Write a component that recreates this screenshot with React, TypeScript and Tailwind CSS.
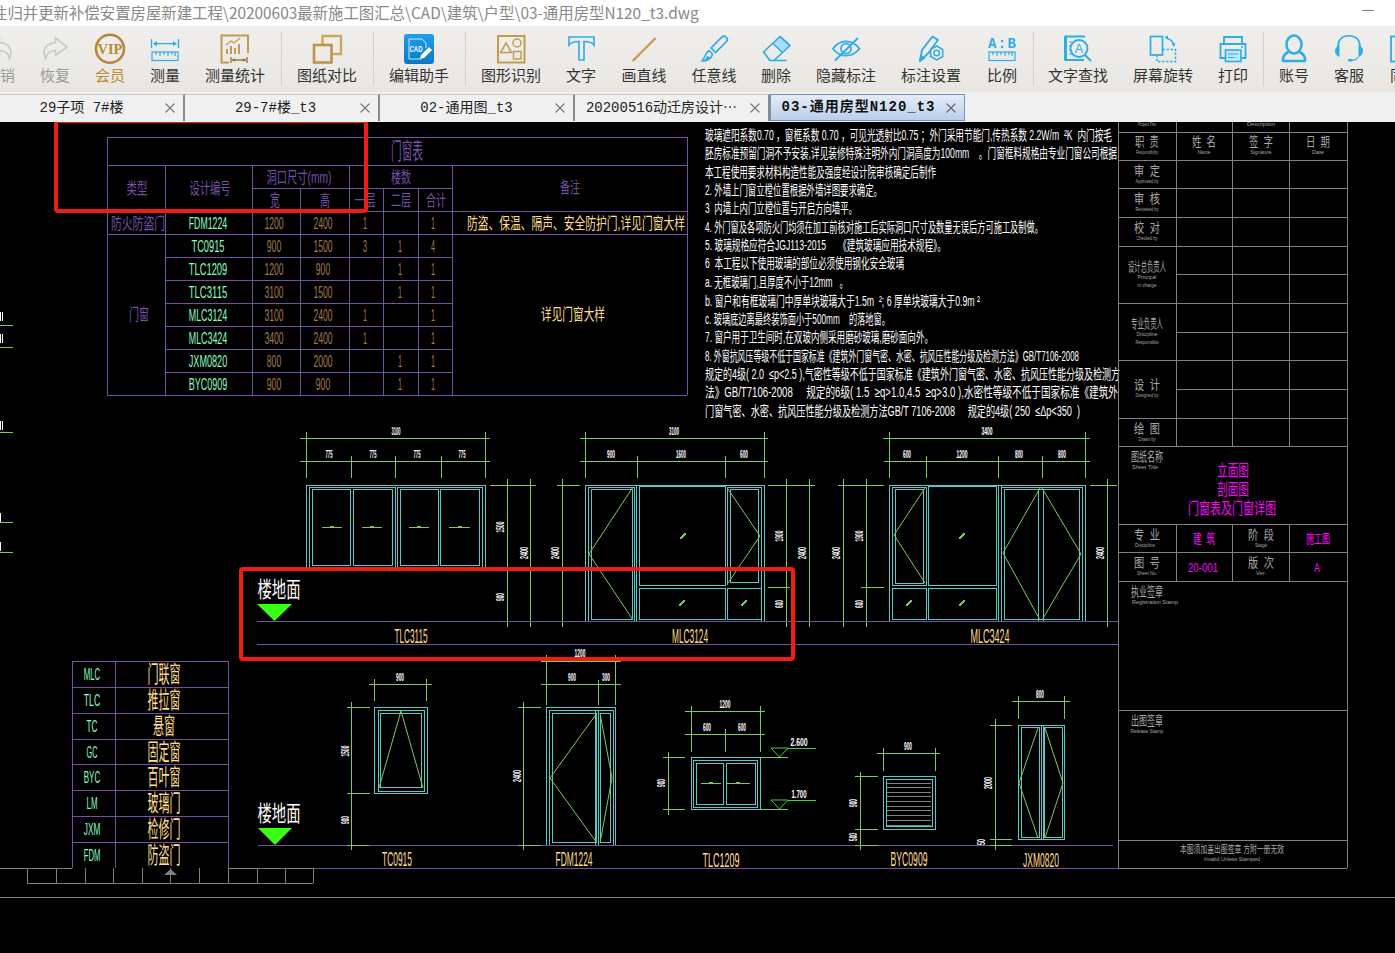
import { ReactNode } from "react";

const CJK = '"Liberation Sans","Noto Sans CJK SC",sans-serif';
const GOLD = "#c19c4e";
const BLUE = "#2cace9";
const PURPLE = "#7650a8";
const GREEN = "#7ccb55";
const CYAN = "#58c9c9";
const MINT = "#86ffc0";
const BROWN = "#a0794a";
const YELLOW = "#ffdf8a";
const GREY = "#808080";
const TXT = "#a8a8a8";
const PINK = "#ff00ff";

const Box = ({ children }: { children: ReactNode }) => (
    <svg width="32" height="32" viewBox="0 0 32 32" fill="none" className="block overflow-visible">
        {children}
    </svg>
);

const arrow = "M16.5 5 L28 14 L16.5 22.5 V17.5 C11 17.5 7.5 20 6.5 25.5 C3 18 6 10 16.5 9.5 Z";

const ruler = (y: number) => (
    <g stroke={BLUE} strokeWidth="1.2">
        <rect x="3" y={y} width="26" height="8.5" />
        <path d={`M7 ${y}v3M11 ${y}v4M15 ${y}v3M19 ${y}v4M23 ${y}v3M26 ${y}v4`} />
    </g>
);

const ICONS: Record<string, ReactNode> = {
    撤销: (
        <Box>
            <path d={arrow} stroke="#c8c8c8" strokeWidth="1.6" transform="matrix(-1 0 0 1 32 0)" />
        </Box>
    ),
    恢复: (
        <Box>
            <path d={arrow} stroke="#c8c8c8" strokeWidth="1.6" />
        </Box>
    ),
    会员: (
        <Box>
            <circle cx="16" cy="15.7" r="14" stroke="#b8863b" strokeWidth="2.6" />
            <text x="16" y="20.5" textAnchor="middle" fontFamily='"Liberation Serif",serif' fontWeight="700" fontSize="14" fill="#b98a2f" textLength="25" lengthAdjust="spacingAndGlyphs">
                VIP
            </text>
        </Box>
    ),
    测量: (
        <Box>
            <path d="M2.5 6v9M29.5 6v9M5 10.7h22" stroke={BLUE} strokeWidth="1.3" />
            <path d="M4 10.7l4-2.6v5.2zM28 10.7l-4-2.6v5.2z" fill={BLUE} />
            {ruler(19)}
        </Box>
    ),
    测量统计: (
        <Box>
            <path d="M10 29.5H2.5V2.5H29V20" stroke={GOLD} strokeWidth="2" />
            <path d="M8 21v-5M12 21v-8M16 21v-6M20 21v-10" stroke={GOLD} strokeWidth="2" />
            <path d="M7 12l5-4 3 2 6-5" stroke={GOLD} strokeWidth="1.3" />
            <path d="M12 24v6M28 24v6M13 27h14" stroke="#9b7b3a" strokeWidth="1.4" />
            <path d="M13 27l3-2v4zM27 27l-3-2v4z" fill="#9b7b3a" />
        </Box>
    ),
    图纸对比: (
        <Box>
            <path d="M11.5 11V3H30V21H21" stroke="#cda955" strokeWidth="2.4" />
            <rect x="3" y="12" width="17.5" height="17.5" stroke="#bc954a" strokeWidth="2.6" />
        </Box>
    ),
    编辑助手: (
        <Box>
            <defs>
                <linearGradient id="cad" x1="0" y1="0" x2="0" y2="1">
                    <stop offset="0" stopColor="#1f9eec" />
                    <stop offset="1" stopColor="#0a77c8" />
                </linearGradient>
            </defs>
            <rect x="1" y="1" width="30" height="30" rx="3" fill="url(#cad)" />
            <path d="M6 6h13l4 4v5M6 6v20h12" stroke="#cfeaff" strokeWidth="1" />
            <text x="13" y="19" textAnchor="middle" fontFamily='"Liberation Sans",sans-serif' fontWeight="700" fontSize="9" fill="#fff" textLength="13" lengthAdjust="spacingAndGlyphs">
                CAD
            </text>
            <path d="M17 26l1-4 8-8 3 3-8 8z" fill="#fff" />
        </Box>
    ),
    图形识别: (
        <Box>
            <rect x="3" y="3" width="26.5" height="26.5" stroke={GOLD} strokeWidth="2" />
            <path d="M11 10l5.5 9.5H5.5z" stroke={GOLD} strokeWidth="1.5" />
            <circle cx="22" cy="10" r="4" stroke={GOLD} strokeWidth="1.5" />
            <rect x="18.5" y="18.5" width="7.5" height="7.5" stroke={GOLD} strokeWidth="1.5" />
        </Box>
    ),
    文字: (
        <Box>
            <path d="M4 4H29V12C27 9 24 8.5 19 8.5V27H14V8.5C9 8.5 6 9 4 12Z" stroke={BLUE} strokeWidth="1.6" />
        </Box>
    ),
    画直线: (
        <Box>
            <path d="M5.3 27.3L27 5.7" stroke="#c2a25a" strokeWidth="2.4" strokeLinecap="round" />
        </Box>
    ),
    任意线: (
        <Box>
            <path d="M13 15L24 4a3.2 3.2 0 0 1 4.5 4.5L17.5 19.5Z" stroke={BLUE} strokeWidth="1.7" />
            <path d="M11 17.5L14.5 21C13.5 26 8 28.5 4 27.8C7 25 7 20 11 17.5Z" stroke={BLUE} strokeWidth="1.5" />
            <path d="M9 23c-1 2-2 3.5-4 4.5c3 0 6-1 8-3z" fill={BLUE} />
        </Box>
    ),
    删除: (
        <Box>
            <path d="M13 10.5L20 3.5L30 12.5L22.5 19.5Z" fill="#a9dff6" />
            <path d="M3.5 19L20 3.5L30 12.5L14 27.5H10Z" stroke={BLUE} strokeWidth="1.7" strokeLinejoin="round" />
            <path d="M13 10.5L22.5 19.5M14 27.5H26.5" stroke={BLUE} strokeWidth="1.5" />
        </Box>
    ),
    隐藏标注: (
        <Box>
            <path d="M3 15.7C10 6 22 6 29.5 15.7C22 25 10 25 3 15.7Z" stroke={BLUE} strokeWidth="1.8" />
            <circle cx="16" cy="15.7" r="5" stroke={BLUE} strokeWidth="1.8" />
            <path d="M5 27.5L28 5" stroke={BLUE} strokeWidth="1.8" />
        </Box>
    ),
    标注设置: (
        <Box>
            <path d="M5 28L7 17L17.5 3.5L23 7L13 20.5Z" stroke={BLUE} strokeWidth="1.9" strokeLinejoin="round" />
            <path d="M4 29L5.5 21.5L10.5 25.5Z" fill={BLUE} />
            <path d="M21.7 13l6 3.5v7l-6 3.5l-6-3.5v-7z" stroke={BLUE} strokeWidth="1.5" fill="#efedea" />
            <circle cx="21.7" cy="20" r="2.8" stroke={BLUE} strokeWidth="1.5" />
        </Box>
    ),
    比例: (
        <Box>
            <text x="16" y="14.5" textAnchor="middle" fontFamily='"Liberation Mono",monospace' fontWeight="700" fontSize="14" fill={BLUE} textLength="28" lengthAdjust="spacing">
                A:B
            </text>
            {ruler(19)}
        </Box>
    ),
    文字查找: (
        <Box>
            <path d="M23 3.5H3.5V27H22" stroke={BLUE} strokeWidth="1.8" />
            <path d="M3.5 3.5V27" stroke={BLUE} strokeWidth="3" />
            <path d="M7 9h3M7 13h3M7 17h3M7 21h3" stroke={BLUE} strokeWidth="1" />
            <circle cx="17" cy="15.5" r="8.5" stroke={BLUE} strokeWidth="1.8" fill="#efedea" />
            <path d="M23 22l6 6" stroke={BLUE} strokeWidth="2" />
            <text x="17" y="20" textAnchor="middle" fontFamily='"Liberation Sans",sans-serif' fontSize="12.5" fill={BLUE}>
                A
            </text>
        </Box>
    ),
    屏幕旋转: (
        <Box>
            <rect x="3.5" y="3.5" width="12" height="18.5" stroke={BLUE} strokeWidth="1.7" />
            <path d="M15.5 16.5H28.5V28.5H10V22" stroke={BLUE} strokeWidth="1.5" strokeDasharray="2.5 1.5" />
            <path d="M19 5c4 1 7 3 8 7" stroke={BLUE} strokeWidth="1.3" />
            <path d="M17.5 4l3.5-1.5v4zM27 14l-2.5-3.5h4z" fill={BLUE} />
        </Box>
    ),
    打印: (
        <Box>
            <path d="M7 11V4H25V11" stroke={BLUE} strokeWidth="1.8" />
            <path d="M8 25H3.5V11H28.5V25H24" stroke={BLUE} strokeWidth="1.8" />
            <rect x="8.5" y="17" width="15.5" height="11.5" fill="#bfe7fa" stroke={BLUE} strokeWidth="1.6" />
            <path d="M11 21h10M11 24.5h7" stroke={BLUE} strokeWidth="1.1" />
            <circle cx="25" cy="14" r="1" fill={BLUE} />
        </Box>
    ),
    账号: (
        <Box>
            <ellipse cx="16" cy="11.5" rx="7.5" ry="9" stroke={BLUE} strokeWidth="2.5" />
            <path d="M10.5 19C6 21 4.5 24 5 28H27C27.5 24 26 21 21.5 19" stroke={BLUE} strokeWidth="2.5" strokeLinejoin="round" />
        </Box>
    ),
    客服: (
        <Box>
            <path d="M5 17V14C5 6 10 2.7 16 2.7S27 6 27 14V17" stroke={BLUE} strokeWidth="1.6" />
            <path d="M6.5 12V24C3.5 23 2 20.5 2 18S3.5 13 6.5 12Z" fill={BLUE} />
            <path d="M25.5 12V24C28.5 23 30 20.5 30 18S28.5 13 25.5 12Z" fill={BLUE} />
            <path d="M25 24C24 26 22 27.3 19 27.3" stroke={BLUE} strokeWidth="1.2" />
            <rect x="15" y="26" width="4.5" height="2.5" rx="1" fill={BLUE} />
        </Box>
    ),
    同步: (
        <Box>
            <rect x="2" y="3.5" width="24" height="25" stroke={BLUE} strokeWidth="1.8" />
        </Box>
    ),
};

// label, width of the toolbar cell, and a marker for the group separators
const TOOLS: [string, number, string?][] = [
    ["撤销", 56, "#999"],
    ["恢复", 54, "#999"],
    ["会员", 56, "#b88a3a"],
    ["测量", 54],
    ["测量统计", 86],
    ["|", 6],
    ["图纸对比", 86],
    ["|", 6],
    ["编辑助手", 86],
    ["|", 6],
    ["图形识别", 86],
    ["文字", 54],
    ["画直线", 72],
    ["任意线", 68],
    ["删除", 56],
    ["隐藏标注", 84],
    ["标注设置", 86],
    ["比例", 56],
    ["|", 6],
    ["文字查找", 84],
    ["屏幕旋转", 86],
    ["打印", 54],
    ["|", 6],
    ["账号", 56],
    ["客服", 54],
    ["同步", 58],
];

const Toolbar = () => (
    <div className="h-[66px] shrink-0 overflow-hidden bg-gradient-to-b from-[#f0efed] to-[#e9e6e2]">
        <div className="ml-[-28px] flex h-full w-[1500px]">
            {TOOLS.map(([label, w, color], i) =>
                label === "|" ? (
                    <div key={i} className="flex w-[6px] shrink-0 justify-center py-[6px]">
                        <div className="w-px bg-[#d2d0cb]" />
                    </div>
                ) : (
                    <div key={i} className="flex shrink-0 flex-col items-center pt-[7px]" style={{ width: w }}>
                        {ICONS[label]}
                        <div className="whitespace-nowrap text-[15px] leading-[20px]" style={{ color: color || "#333" }}>
                            {label}
                        </div>
                    </div>
                )
            )}
        </div>
    </div>
);

const Close = ({ dark }: { dark?: boolean }) => (
    <svg width="10" height="10" viewBox="0 0 10 10" className="absolute right-[8px] top-[8px]">
        <path d="M0.5 0.5L9.5 9.5M9.5 0.5L0.5 9.5" stroke={dark ? "#666" : "#777"} strokeWidth="1.2" />
    </svg>
);

const TABS: [string, number][] = [
    ["29子项 7#楼", 185],
    ["29-7#楼_t3", 195],
    ["02-通用图_t3", 195],
    ["20200516动迁房设计⋯", 195],
];

const Tabs = () => (
    <div className="flex h-[30px] shrink-0 items-end bg-[#f0f0f0] pb-px font-['Liberation_Mono','Noto_Sans_CJK_SC',monospace] text-[14px] text-[#222]">
        {TABS.map(([t, w], i) => (
            <div
                key={t}
                className={`relative flex h-[27px] shrink-0 items-center justify-center border-r-2 border-t border-r-[#8a8a8a] border-t-[#c8c8c8] bg-[#f0f0f0] whitespace-nowrap ${
                    i === 1 ? "pr-[12px]" : "pr-[20px]"
                }`}
                style={{ width: w }}
            >
                {t}
                <Close />
            </div>
        ))}
        <div className="relative flex h-[27px] w-[195px] shrink-0 items-center justify-center border border-[#6f94c4] bg-gradient-to-b from-[#e6edf8] to-[#b9cfe9] pr-[18px] font-bold tracking-[1px] whitespace-nowrap text-[#111]">
            03-通用房型N120_t3
            <Close dark />
        </div>
    </div>
);

// tall, squeezed CAD lettering: x/y are the centre of the string, w its width on screen
const T = ({ x, y, w, s = 13, c = "#fff", t, r, start }: { x: number; y: number; w?: number; s?: number; c?: string; t: string; r?: boolean; start?: boolean }) => (
    <text
        x={x}
        y={y}
        fontSize={s}
        fill={c}
        fontWeight={s <= 11 && c === "#fff" ? 700 : 400}
        textAnchor={start ? "start" : "middle"}
        dominantBaseline="central"
        textLength={w}
        lengthAdjust="spacingAndGlyphs"
        transform={r ? `rotate(-90 ${x} ${y})` : undefined}
        xmlSpace="preserve"
    >
        {t}
    </text>
);

const Lines = ({ c, d, w = 1 }: { c: string; d: number[][]; w?: number }) => (
    <path d={d.map((a) => `M${a[0]} ${a[1]}L${a[2]} ${a[3]}`).join("")} stroke={c} strokeWidth={w} fill="none" shapeRendering="crispEdges" />
);

const Rects = ({ d }: { d: number[][] }) => (
    <path d={d.map((a) => `M${a[0]} ${a[1]}H${a[2]}V${a[3]}H${a[0]}Z`).join("")} stroke={CYAN} fill="none" shapeRendering="crispEdges" />
);

const Swing = ({ d }: { d: number[][] }) => <path d={d.map((p) => `M${p[0]} ${p[1]}L${p[2]} ${p[3]}L${p[4]} ${p[5]}`).join("")} stroke={GREEN} fill="none" />;

// dimension line with ticks: y, from, to, tick xs, top and bottom of the ticks
const HDim = ({ y, a, b, ticks, top, bot }: { y: number; a: number; b: number; ticks: number[]; top: number; bot: number }) => (
    <Lines c={GREEN} d={[[a, y, b, y], ...ticks.map((x) => [x, top, x, bot])]} />
);

const Glass = ({ x, y }: { x: number; y: number }) => <path d={`M${x - 3} ${y + 3}L${x + 3} ${y - 3}M${x - 2} ${y + 3}L${x + 3} ${y - 2}M${x - 3} ${y + 2}L${x + 2} ${y - 3}`} stroke={GREEN} fill="none" />;

const Handle = ({ a, b, y }: { a: number; b: number; y: number }) => (
    <g>
        <Lines c={GREEN} d={[[a, y, b, y]]} />
        <Lines c={GREEN} d={[[(a + b) / 2 - 2, y - 1, (a + b) / 2 + 2, y - 1]]} />
    </g>
);

const DoorTable = () => {
    const rows = [
        ["FDM1224", "1200", "2400", "1", "", "1"],
        ["TC0915", "900", "1500", "3", "1", "4"],
        ["TLC1209", "1200", "900", "", "1", "1"],
        ["TLC3115", "3100", "1500", "", "1", "1"],
        ["MLC3124", "3100", "2400", "1", "", "1"],
        ["MLC3424", "3400", "2400", "1", "", "1"],
        ["JXM0820", "800", "2000", "", "1", "1"],
        ["BYC0909", "900", "900", "", "1", "1"],
    ];
    const ys = [224, 247, 270, 293, 316, 339, 362, 385];
    return (
        <g>
            <Lines
                c={PURPLE}
                d={[
                    [107, 137, 687, 137],
                    [107, 165, 687, 165],
                    [252, 188, 452, 188],
                    [107, 211, 687, 211],
                    [107, 234, 687, 234],
                    [165, 257, 452, 257],
                    [165, 280, 452, 280],
                    [165, 303, 452, 303],
                    [165, 326, 452, 326],
                    [165, 349, 452, 349],
                    [165, 372, 452, 372],
                    [107, 395, 687, 395],
                    [107, 137, 107, 395],
                    [687, 137, 687, 395],
                    [165, 165, 165, 395],
                    [252, 165, 252, 395],
                    [300, 188, 300, 395],
                    [349, 165, 349, 395],
                    [383, 188, 383, 395],
                    [418, 188, 418, 395],
                    [452, 165, 452, 395],
                ]}
            />
            <T x={407} y={151} w={32} s={23} c={PURPLE} t="门窗表" />
            <T x={137} y={188} w={21} s={16} c={PURPLE} t="类型" />
            <T x={210} y={188} w={41} s={16} c={PURPLE} t="设计编号" />
            <T x={299} y={177} w={65} s={16} c={PURPLE} t="洞口尺寸(mm)" />
            <T x={401} y={177} w={20} s={16} c={PURPLE} t="楼数" />
            <T x={275} y={200} w={10} s={16} c={PURPLE} t="宽" />
            <T x={325} y={200} w={10} s={16} c={PURPLE} t="高" />
            <T x={365} y={200} w={21} s={16} c={PURPLE} t="一层" />
            <T x={401} y={200} w={20} s={16} c={PURPLE} t="二层" />
            <T x={436} y={200} w={20} s={16} c={PURPLE} t="合计" />
            <T x={570} y={187} w={20} s={16} c={PURPLE} t="备注" />
            <T x={138} y={223} w={54} s={16} c={PURPLE} t="防火防盗门" />
            <T x={139} y={314} w={20} s={16} c={PURPLE} t="门窗" />
            <T x={576} y={223} w={218} s={16} c={YELLOW} t="防盗、保温、隔声、安全防护门,详见门窗大样" />
            <T x={573} y={314} w={64} s={16} c={YELLOW} t="详见门窗大样" />
            {rows.map((r, i) => (
                <g key={r[0]}>
                    <T x={208} y={ys[i] - 0.5} w={r[0].length * 5.5} s={16} c={MINT} t={r[0]} />
                    <T x={274} y={ys[i] - 0.5} w={r[1].length * 4.8} s={16} c={BROWN} t={r[1]} />
                    <T x={323} y={ys[i] - 0.5} w={r[2].length * 4.8} s={16} c={BROWN} t={r[2]} />
                    {r[3] && <T x={365} y={ys[i] - 0.5} w={4} s={16} c={BROWN} t={r[3]} />}
                    {r[4] && <T x={400} y={ys[i] - 0.5} w={4} s={16} c={BROWN} t={r[4]} />}
                    {r[5] && <T x={433} y={ys[i] - 0.5} w={4} s={16} c={BROWN} t={r[5]} />}
                </g>
            ))}
        </g>
    );
};

const NOTES: [string, number, number][] = [
    ["玻璃遮阳系数0.70 ，窗框系数 0.70 ，可见光透射比0.75 ；外门采用节能门,传热系数 2.2W/m  ²K  内门按毛", 135, 407],
    ["胚房标准预留门洞不予安装,详见装修特殊注明外内门洞高度为100mm    。门窗框料规格由专业门窗公司根据", 153, 412],
    ["本工程使用要求材料构造性能及强度经设计院审核确定后制作", 172, 231],
    ["2. 外墙上门窗立樘位置根据外墙详图要求确定。", 190, 177],
    ["3  内墙上内门立樘位置与开启方向墙平。", 208, 152],
    ["4. 外门窗及各项防火门均须在加工前核对施工后实际洞口尺寸及数量无误后方可施工及制做。", 227, 338],
    ["5. 玻璃规格应符合JGJ113-2015     《建筑玻璃应用技术规程》。", 245, 241],
    ["6  本工程以下使用玻璃的部位必须使用钢化安全玻璃", 263, 199],
    ["a. 无框玻璃门,且厚度不小于12mm   。", 282, 143],
    ["b. 窗户和有框玻璃门中厚单块玻璃大于1.5m  ²; 6 厚单块玻璃大于0.9m ²", 301, 275],
    ["c. 玻璃底边离最终装饰面小于500mm    的落地窗。", 319, 185],
    ["7. 窗户用于卫生间时,在双玻内侧采用磨砂玻璃,磨砂面向外。", 337, 228],
    ["8. 外窗抗风压等级不低于国家标准《建筑外门窗气密、水密、抗风压性能分级及检测方法》GB/T7106-2008", 356, 374],
    ["规定的4级( 2.0  ≤p<2.5 ),气密性等级不低于国家标准《建筑外门窗气密、水密、抗风压性能分级及检测方", 374, 415],
    ["法》GB/T7106-2008     规定的6级( 1.5  ≥q>1.0,4.5  ≥q>3.0 ),水密性等级不低于国家标准《建筑外", 392, 413],
    ["门窗气密、水密、抗风压性能分级及检测方法GB/T 7106-2008     规定的4级( 250  ≤Δp<350  )", 411, 375],
];

const TitleBlock = () => {
    const full = [160, 188, 217, 246, 303, 360, 418, 446, 524, 552, 581, 710, 840];
    const head: [string, string, number, number][] = [
        ["职  责", "Responsibility", 1147, 22],
        ["姓  名", "Name", 1204, 13],
        ["签  字", "Signature", 1261, 21],
        ["日  期", "Date", 1318, 12],
    ];
    const side: [string, string, number, string?][] = [
        ["审  定", "Approved by", 170],
        ["审  核", "Reviewed by", 198],
        ["校  对", "Checked by", 227],
        ["设计总负责人", "Principal", 266, "in charge"],
        ["专业负责人", "Discipline", 323, "Responsible"],
        ["设  计", "Designed by", 384],
        ["绘  图", "Drawn by", 428],
    ];
    return (
        <g>
            <Lines
                c={GREY}
                d={[
                    [1118, 132, 1347, 132],
                    [1118, 868, 1347, 868],
                    [1118, 122, 1118, 868],
                    [1347, 122, 1347, 868],
                    [1176, 122, 1176, 446],
                    [1232, 122, 1232, 446],
                    [1289, 122, 1289, 446],
                    [1176, 524, 1176, 581],
                    [1232, 524, 1232, 581],
                    [1289, 524, 1289, 581],
                    [1176, 274, 1347, 274],
                    [1176, 332, 1347, 332],
                    [1176, 389, 1347, 389],
                    ...full.map((y) => [1118, y, 1347, y]),
                ]}
            />
            <T x={1147} y={124} w={18} s={5} c={TXT} t="Project Title" />
            <T x={1261} y={124} w={28} s={5} c={TXT} t="Description" />
            {head.map(([a, b, x, w]) => (
                <g key={a}>
                    <T x={x} y={141} w={24} s={13} c={TXT} t={a} />
                    <T x={x} y={152} w={w} s={6} c={TXT} t={b} />
                </g>
            ))}
            {side.map(([a, b, y, b2]) => (
                <g key={a}>
                    <T x={1147} y={y} w={a.length === 6 ? 38 : a.length === 5 ? 32 : 26} s={13} c={TXT} t={a} />
                    <T x={1147} y={y + 11} w={b.length * 2.1} s={6} c={TXT} t={b} />
                    {b2 && <T x={1147} y={y + 19} w={b2.length * 2.1} s={6} c={TXT} t={b2} />}
                </g>
            ))}
            <T x={1147} y={456} w={32} s={13} c={TXT} t="图纸名称" />
            <T x={1145} y={467} w={26} s={6} c={TXT} t="Sheet Title" />
            <T x={1233} y={470} w={32} s={16} c={PINK} t="立面图" />
            <T x={1233} y={489} w={32} s={16} c={PINK} t="剖面图" />
            <T x={1232} y={508} w={88} s={16} c={PINK} t="门窗表及门窗详图" />
            <T x={1147} y={534} w={26} s={13} c={TXT} t="专  业" />
            <T x={1145} y={545} w={20} s={6} c={TXT} t="Discipline" />
            <T x={1204} y={538} w={22} s={13} c={PINK} t="建  筑" />
            <T x={1261} y={534} w={26} s={13} c={TXT} t="阶  段" />
            <T x={1261} y={545} w={12} s={6} c={TXT} t="Stage" />
            <T x={1318} y={538} w={24} s={13} c={PINK} t="施工图" />
            <T x={1147} y={562} w={26} s={13} c={TXT} t="图  号" />
            <T x={1147} y={573} w={20} s={6} c={TXT} t="Sheet No." />
            <T x={1203} y={567} w={30} s={13} c={PINK} t="20-001" />
            <T x={1261} y={562} w={26} s={13} c={TXT} t="版  次" />
            <T x={1261} y={573} w={10} s={6} c={TXT} t="Ver." />
            <T x={1317} y={567} w={6} s={13} c={PINK} t="A" />
            <T x={1147} y={591} w={32} s={13} c={TXT} t="执业签章" />
            <T x={1155} y={602} w={46} s={6} c={TXT} t="Registration Stamp" />
            <T x={1147} y={720} w={32} s={13} c={TXT} t="出图签章" />
            <T x={1147} y={731} w={33} s={6} c={TXT} t="Release Stamp" />
            <T x={1232} y={849} w={104} s={10} c={TXT} t="本图须加盖出图签章 方附一册无效" />
            <T x={1232} y={859} w={56} s={6} c={TXT} t="Invalid Unless Stamped" />
        </g>
    );
};

const Tlc3115 = () => (
    <g>
        <HDim y={438} a={300} b={490} ticks={[306, 485]} top={432} bot={478} />
        <HDim y={461} a={300} b={490} ticks={[351, 395, 441]} top={456} bot={478} />
        <T x={396} y={431} w={9} s={11} t="3100" />
        <T x={329} y={454} w={7} s={11} t="775" />
        <T x={373} y={454} w={7} s={11} t="775" />
        <T x={417} y={454} w={7} s={11} t="775" />
        <T x={462} y={454} w={7} s={11} t="775" />
        <Rects
            d={[
                [306, 485, 485, 570],
                [309, 487, 395, 570],
                [397, 487, 482, 570],
                [312, 489, 350, 565],
                [353, 489, 392, 565],
                [400, 489, 438, 565],
                [440, 489, 479, 565],
            ]}
        />
        <Handle a={322} b={342} y={527} />
        <Handle a={362} b={382} y={527} />
        <Handle a={409} b={429} y={527} />
        <Handle a={449} b={470} y={527} />
        <Lines c={GREY} d={[[306, 570, 485, 570]]} />
        <Lines
            c={GREEN}
            d={[
                [490, 485, 536, 485],
                [490, 570, 512, 570],
                [490, 621, 540, 621],
                [507, 479, 507, 627],
                [530, 479, 530, 627],
                [557, 485, 580, 485],
                [557, 621, 580, 621],
                [562, 479, 562, 627],
            ]}
        />
        <T x={500} y={527} w={11} s={10} r t="1500" />
        <T x={500} y={597} w={8} s={10} r t="900" />
        <T x={524} y={553} w={12} s={10} r t="2400" />
        <T x={555} y={553} w={12} s={10} r t="2400" />
    </g>
);

const Mlc3124 = () => (
    <g>
        <HDim y={438} a={580} b={768} ticks={[585, 764]} top={432} bot={478} />
        <HDim y={461} a={580} b={768} ticks={[637, 725]} top={456} bot={478} />
        <T x={674} y={431} w={10} s={11} t="3100" />
        <T x={611} y={454} w={8} s={11} t="900" />
        <T x={681} y={454} w={10} s={11} t="1600" />
        <T x={744} y={454} w={8} s={11} t="600" />
        <Lines
            c={CYAN}
            d={[
                [585, 485, 764, 485],
                [585, 485, 585, 621],
                [764, 485, 764, 621],
                [588, 487, 634, 487],
                [588, 487, 588, 621],
                [634, 487, 634, 621],
                [636, 485, 636, 621],
                [761, 487, 761, 621],
                [727, 487, 761, 487],
            ]}
        />
        <Rects
            d={[
                [591, 489, 632, 619],
                [639, 486, 725, 585],
                [639, 588, 725, 619],
                [730, 489, 758, 582],
                [727, 588, 761, 619],
            ]}
        />
        <Lines c={CYAN} d={[[727, 487, 727, 585]]} />
        <Swing
            d={[
                [633, 487, 589, 554, 633, 620],
                [728, 489, 760, 536, 728, 583],
            ]}
        />
        <Glass x={683} y={536} />
        <Glass x={682} y={603} />
        <Glass x={744} y={603} />
        <Lines
            c={GREEN}
            d={[
                [768, 485, 815, 485],
                [768, 621, 815, 621],
                [768, 587, 790, 587],
                [786, 479, 786, 627],
                [809, 479, 809, 627],
                [838, 485, 884, 485],
                [838, 621, 884, 621],
                [861, 587, 884, 587],
                [843, 479, 843, 627],
                [866, 479, 866, 627],
                [1090, 485, 1117, 485],
                [1090, 621, 1117, 621],
                [1107, 479, 1107, 627],
            ]}
        />
        <T x={779} y={536} w={11} s={10} r t="1900" />
        <T x={779} y={604} w={8} s={10} r t="600" />
        <T x={802} y={553} w={12} s={10} r t="2400" />
        <T x={836} y={553} w={12} s={10} r t="2400" />
        <T x={859} y={536} w={11} s={10} r t="1900" />
        <T x={859} y={604} w={8} s={10} r t="600" />
        <T x={1100} y={553} w={12} s={10} r t="2400" />
    </g>
);

const Mlc3424 = () => (
    <g>
        <HDim y={438} a={883} b={1090} ticks={[889, 1085]} top={432} bot={478} />
        <HDim y={461} a={884} b={1090} ticks={[926, 998, 1042]} top={456} bot={478} />
        <T x={987} y={431} w={11} s={11} t="3400" />
        <T x={907} y={454} w={8} s={11} t="600" />
        <T x={962} y={454} w={11} s={11} t="1200" />
        <T x={1019} y={454} w={8} s={11} t="800" />
        <T x={1062} y={454} w={8} s={11} t="800" />
        <Lines
            c={CYAN}
            d={[
                [889, 485, 1085, 485],
                [889, 485, 889, 621],
                [1085, 485, 1085, 621],
                [998, 485, 998, 621],
                [1001, 485, 1001, 621],
                [1082, 487, 1082, 621],
                [1001, 487, 1082, 487],
                [1038, 489, 1038, 621],
                [1043, 489, 1043, 621],
            ]}
        />
        <Rects
            d={[
                [892, 487, 926, 585],
                [895, 489, 923, 583],
                [892, 588, 926, 619],
                [928, 486, 996, 585],
                [928, 588, 996, 619],
                [1004, 489, 1079, 619],
            ]}
        />
        <Swing
            d={[
                [925, 488, 894, 535, 925, 583],
                [1040, 488, 1003, 553, 1040, 620],
                [1042, 488, 1081, 554, 1042, 620],
            ]}
        />
        <Glass x={962} y={536} />
        <Glass x={962} y={603} />
        <Glass x={909} y={603} />
    </g>
);

const SecondRow = () => (
    <g>
        {/* TC0915 */}
        <HDim y={684} a={369} b={432} ticks={[374, 426]} top={679} bot={701} />
        <T x={400} y={677} w={8} s={11} t="900" />
        <Rects
            d={[
                [374, 707, 427, 793],
                [378, 710, 424, 791],
                [380, 713, 421, 787],
            ]}
        />
        <Swing d={[[379, 788, 401, 711, 423, 788]]} />
        <Lines
            c={GREEN}
            d={[
                [351, 702, 351, 850],
                [347, 707, 370, 707],
                [347, 793, 370, 793],
                [347, 845, 369, 845],
            ]}
        />
        <T x={345} y={751} w={11} s={10} r t="1500" />
        <T x={345} y={820} w={8} s={10} r t="900" />
        <T x={397} y={858} w={30} s={21} c={YELLOW} t="TC0915" />
        {/* FDM1224 */}
        <HDim y={661} a={541} b={621} ticks={[546, 615]} top={655} bot={705} />
        <HDim y={684} a={541} b={621} ticks={[598]} top={680} bot={705} />
        <T x={580} y={653} w={11} s={11} t="1200" />
        <T x={572} y={677} w={8} s={11} t="900" />
        <T x={606} y={677} w={8} s={11} t="300" />
        <Lines
            c={CYAN}
            d={[
                [546, 707, 615, 707],
                [546, 707, 546, 845],
                [615, 707, 615, 845],
                [549, 710, 613, 710],
                [549, 710, 549, 845],
                [613, 710, 613, 845],
                [595, 710, 595, 845],
                [598, 710, 598, 845],
            ]}
        />
        <Rects
            d={[
                [552, 713, 596, 842],
                [600, 713, 610, 842],
            ]}
        />
        <Swing
            d={[
                [597, 713, 550, 778, 597, 843],
                [600, 713, 612, 778, 600, 843],
            ]}
        />
        <Lines
            c={GREEN}
            d={[
                [523, 702, 523, 850],
                [518, 707, 541, 707],
                [518, 845, 541, 845],
            ]}
        />
        <T x={517} y={776} w={12} s={10} r t="2400" />
        <T x={574} y={858} w={37} s={21} c={YELLOW} t="FDM1224" />
        {/* TLC1209 */}
        <HDim y={711} a={685} b={765} ticks={[691, 760]} top={706} bot={752} />
        <HDim y={734} a={685} b={765} ticks={[725]} top={729} bot={752} />
        <T x={725} y={704} w={11} s={11} t="1200" />
        <T x={707} y={727} w={8} s={11} t="600" />
        <T x={742} y={727} w={8} s={11} t="600" />
        <Rects
            d={[
                [691, 757, 760, 809],
                [693, 760, 757, 807],
                [696, 763, 723, 804],
                [726, 763, 755, 804],
            ]}
        />
        <Handle a={701} b={721} y={783} />
        <Handle a={726} b={750} y={783} />
        <Lines
            c={GREEN}
            d={[
                [668, 752, 668, 815],
                [663, 757, 685, 757],
                [663, 809, 685, 809],
                [760, 757, 788, 757],
                [760, 809, 788, 809],
            ]}
        />
        <path d="M771 748L788 748L779.5 757ZM771 800L788 800L779.5 809Z" stroke="#36d636" fill="none" />
        <Lines
            c="#36d636"
            d={[
                [788, 748, 816, 748],
                [788, 800, 816, 800],
            ]}
        />
        <T x={799} y={742} w={17} s={11} t="2.600" />
        <T x={799} y={794} w={15} s={11} t="1.700" />
        <T x={661} y={783} w={8} s={10} r t="900" />
        <T x={721} y={859} w={37} s={21} c={YELLOW} t="TLC1209" />
        {/* BYC0909 */}
        <HDim y={753} a={877} b={940} ticks={[883, 935]} top={748} bot={771} />
        <T x={908} y={746} w={8} s={11} t="900" />
        <Rects
            d={[
                [883, 776, 935, 829],
                [886, 779, 932, 826],
            ]}
        />
        <Lines c={GREY} d={[783, 787, 792, 796, 801, 806, 810, 815, 820, 825].map((y) => [887, y, 931, y])} />
        <Lines
            c={GREEN}
            d={[
                [860, 772, 860, 850],
                [855, 776, 878, 776],
                [855, 829, 878, 829],
                [855, 845, 878, 845],
            ]}
        />
        <T x={853} y={803} w={8} s={10} r t="900" />
        <T x={853} y={837} w={8} s={10} r t="500" />
        <T x={909} y={858} w={37} s={21} c={YELLOW} t="BYC0909" />
        {/* JXM0820 */}
        <HDim y={701} a={1012} b={1070} ticks={[1018, 1064]} top={696} bot={719} />
        <T x={1040} y={694} w={8} s={11} t="800" />
        <Rects
            d={[
                [1018, 725, 1064, 839],
                [1021, 727, 1039, 837],
                [1044, 727, 1062, 837],
            ]}
        />
        <Lines
            c={CYAN}
            d={[
                [1041, 725, 1041, 839],
                [1043, 725, 1043, 839],
            ]}
        />
        <Swing
            d={[
                [1038, 728, 1019, 783, 1038, 838],
                [1045, 728, 1063, 783, 1045, 838],
            ]}
        />
        <Lines
            c={GREEN}
            d={[
                [995, 719, 995, 850],
                [990, 725, 1012, 725],
                [990, 839, 1012, 839],
                [990, 845, 1012, 845],
            ]}
        />
        <T x={988} y={783} w={12} s={10} r t="2000" />
        <T x={981} y={842} w={6} s={10} r t="50" />
        <T x={1041} y={859} w={36} s={21} c={YELLOW} t="JXM0820" />
    </g>
);

const LEGEND = [
    ["MLC", "门联窗", 674],
    ["TLC", "推拉窗", 700],
    ["TC", "悬窗", 726],
    ["GC", "固定窗", 752],
    ["BYC", "百叶窗", 777],
    ["LM", "玻璃门", 803],
    ["JXM", "检修门", 829],
    ["FDM", "防盗门", 855],
] as const;

const Legend = () => (
    <g>
        <Lines
            c={PURPLE}
            d={[
                [72, 661, 72, 868],
                [115, 661, 115, 868],
                [228, 661, 228, 868],
                ...[661, 687, 713, 739, 764, 790, 816, 842].map((y) => [72, y, 228, y]),
            ]}
        />
        {LEGEND.map(([a, b, y]) => (
            <g key={a}>
                <T x={92} y={y} w={a.length * 5.5} s={17} c={MINT} t={a} />
                <T x={164} y={y} w={b.length * 11} s={23} c={YELLOW} t={b} />
            </g>
        ))}
    </g>
);

const Drawing = () => (
    <svg width="1395" height="831" viewBox="0 122 1395 831" fontFamily={CJK} className="block">
        <DoorTable />
        {NOTES.map(([t, y, w]) => (
            <T key={y} x={705} y={y} w={w} s={14} t={t} start />
        ))}
        <TitleBlock />
        <Tlc3115 />
        <Mlc3124 />
        <Mlc3424 />
        <Lines
            c={PURPLE}
            d={[
                [257, 621, 1118, 621],
                [257, 644, 1118, 644],
                [258, 845, 1113, 845],
                [228, 868, 1118, 868],
            ]}
        />
        <T x={279} y={589} w={43} s={22} t="楼地面" />
        <path d="M257 604H292L274.5 621Z" fill="#38ff14" />
        <T x={411} y={635} w={33} s={21} c={YELLOW} t="TLC3115" />
        <T x={690} y={635} w={36} s={21} c={YELLOW} t="MLC3124" />
        <T x={990} y={635} w={39} s={21} c={YELLOW} t="MLC3424" />
        <T x={279} y={813} w={43} s={22} t="楼地面" />
        <path d="M258 828H292L275 845Z" fill="#38ff14" />
        <SecondRow />
        <Legend />
        <Lines
            c={GREY}
            d={[
                [0, 868, 72, 868],
                [0, 897, 1395, 897],
                [27, 883, 313, 883],
                ...[27, 56, 85, 113, 142, 170, 199, 228, 257, 285, 313].map((x) => [x, 868, x, 883]),
                [228, 868, 313, 868],
            ]}
        />
        <path d="M164 875L170.5 869L177 875Z" fill="#808080" />
        <Lines
            c="#fff"
            d={[
                [0, 312, 0, 321],
                [2, 312, 2, 321],
                [0, 334, 0, 343],
                [2, 334, 2, 343],
                [0, 421, 0, 430],
                [2, 421, 2, 430],
                [0, 513, 0, 522],
                [0, 542, 0, 551],
            ]}
        />
        <Lines
            c={GREEN}
            d={[
                [0, 325, 13, 325],
                [0, 347, 13, 347],
                [0, 432, 13, 432],
                [0, 522, 13, 522],
                [0, 552, 13, 552],
            ]}
        />
    </svg>
);

const App = () => (
    <div className="flex h-[953px] w-[1395px] flex-col overflow-hidden bg-black font-['Noto_Sans_CJK_SC','Liberation_Sans',sans-serif]">
        <div className="relative flex h-[26px] shrink-0 items-center overflow-hidden bg-white">
            <span className="ml-[-8px] whitespace-nowrap text-[15.4px] text-[#888]">注归并更新补偿安置房屋新建工程\20200603最新施工图汇总\CAD\建筑\户型\03-通用房型N120_t3.dwg</span>
            <div className="absolute left-[1362px] top-[10px] h-px w-[12px] bg-[#888]" />
        </div>
        <Toolbar />
        <Tabs />
        <div className="relative flex-1 overflow-hidden">
            <Drawing />
            {/* red markups someone drew over the screenshot */}
            <div className="absolute left-[54px] top-[-3px] h-[94px] w-[314px] rounded-[4px] border-4 border-[#f01e12]" />
            <div className="absolute left-[239px] top-[445px] h-[94px] w-[556px] rounded-[4px] border-4 border-[#f01e12]" />
        </div>
    </div>
);

export default App;
